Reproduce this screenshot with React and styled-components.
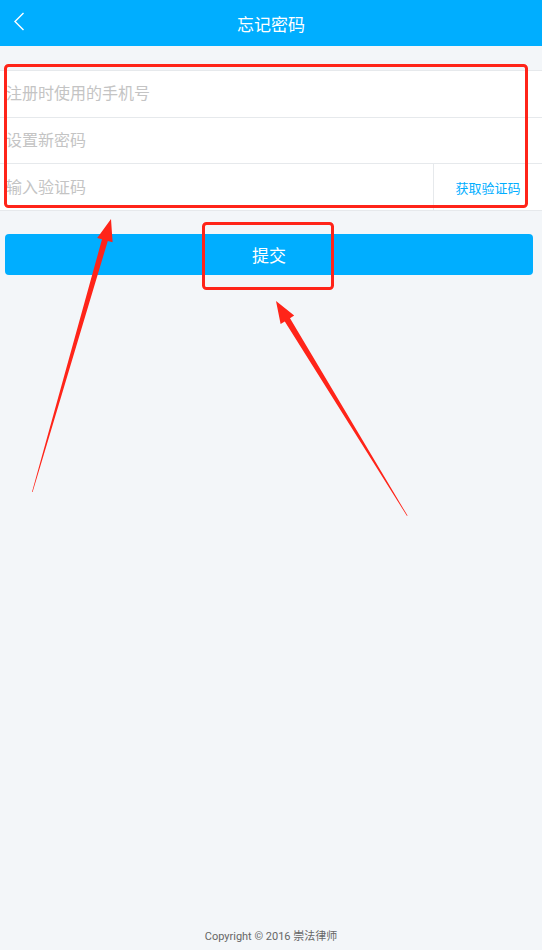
import React from "react";
import styled, { createGlobalStyle } from "styled-components";

const colors = {
  blue: "#00aeff",
  bg: "#f3f6f9",
  line: "#e6e9ec",
  placeholder: "#c4c4c4",
  red: "#ff2419",
};

const GlobalStyle = createGlobalStyle`
  html, body {
    margin: 0;
    padding: 0;
    background: ${colors.bg};
  }
  * {
    box-sizing: border-box;
  }
  body {
    font-family: Roboto, "Noto Sans CJK SC", sans-serif;
  }
`;

const Page = styled.div`
  position: relative;
  min-height: 950px;
  display: flex;
  flex-direction: column;
  background: ${colors.bg};
`;

const Header = styled.header`
  position: relative;
  height: 46px;
  display: flex;
  align-items: center;
  justify-content: center;
  background: ${colors.blue};
  color: #fff;
  font-size: 17px;
`;

const BackButton = styled.button`
  position: absolute;
  left: 8px;
  top: 8px;
  width: 24px;
  height: 28px;
  padding: 0;
  border: none;
  background: transparent;
  cursor: pointer;
`;

const Form = styled.div`
  margin-top: 24px;
  background: #fff;
  border-top: 1px solid ${colors.line};
`;

const Row = styled.div`
  display: flex;
  height: 46.7px;
  border-bottom: 1px solid ${colors.line};
`;

const Input = styled.input`
  flex: 1;
  min-width: 0;
  height: 100%;
  padding: 0 6px;
  border: none;
  outline: none;
  background: transparent;
  font-family: inherit;
  font-size: 16px;
  color: #333;

  &::placeholder {
    color: ${colors.placeholder};
  }
`;

const CodeButton = styled.button`
  width: 109px;
  height: 100%;
  border: none;
  border-left: 1px solid ${colors.line};
  background: transparent;
  font-family: inherit;
  font-size: 13px;
  color: ${colors.blue};
  padding: 0;
  cursor: pointer;
`;

const Submit = styled.button`
  margin: 23px 9px 0 5px;
  height: 41px;
  border: none;
  border-radius: 4px;
  background: ${colors.blue};
  color: #fff;
  font-family: inherit;
  font-size: 17px;
  cursor: pointer;
`;

const Footer = styled.footer`
  margin-top: auto;
  padding-bottom: 7px;
  text-align: center;
  font-size: 11px;
  color: #666;
`;

const Annotations = styled.svg`
  position: absolute;
  left: 0;
  top: 0;
  width: 542px;
  height: 950px;
  pointer-events: none;
`;

export default function App() {
  return (
    <>
      <GlobalStyle />
      <Page>
        <Header>
          <BackButton aria-label="返回">
            <svg width="24" height="28" viewBox="0 0 24 28">
              <polyline
                points="15.5,5 7,13.5 15.5,22"
                fill="none"
                stroke="#fff"
                strokeWidth="1.4"
              />
            </svg>
          </BackButton>
          忘记密码
        </Header>

        <Form>
          <Row>
            <Input placeholder="注册时使用的手机号" />
          </Row>
          <Row>
            <Input type="password" placeholder="设置新密码" />
          </Row>
          <Row>
            <Input placeholder="输入验证码" />
            <CodeButton>获取验证码</CodeButton>
          </Row>
        </Form>

        <Submit>提交</Submit>

        <Footer>Copyright © 2016 崇法律师</Footer>

        {/* red annotation marks drawn over the screenshot */}
        <Annotations viewBox="0 0 542 950">
          <rect
            x="5.5"
            y="65.5"
            width="521"
            height="141"
            rx="3"
            fill="none"
            stroke={colors.red}
            strokeWidth="3"
          />
          <rect
            x="203.5"
            y="223.5"
            width="129"
            height="65"
            rx="3"
            fill="none"
            stroke={colors.red}
            strokeWidth="3"
          />
          <polygon
            fill={colors.red}
            points="32,492 102,239.3 97.2,237.9 111,219 112.6,242.3 107.8,240.9 32.6,492"
          />
          <polygon
            fill={colors.red}
            points="407,516 284.8,321.4 280.6,324 276,301 294.2,315.6 290,318.2 407.5,515.6"
          />
        </Annotations>
      </Page>
    </>
  );
}
